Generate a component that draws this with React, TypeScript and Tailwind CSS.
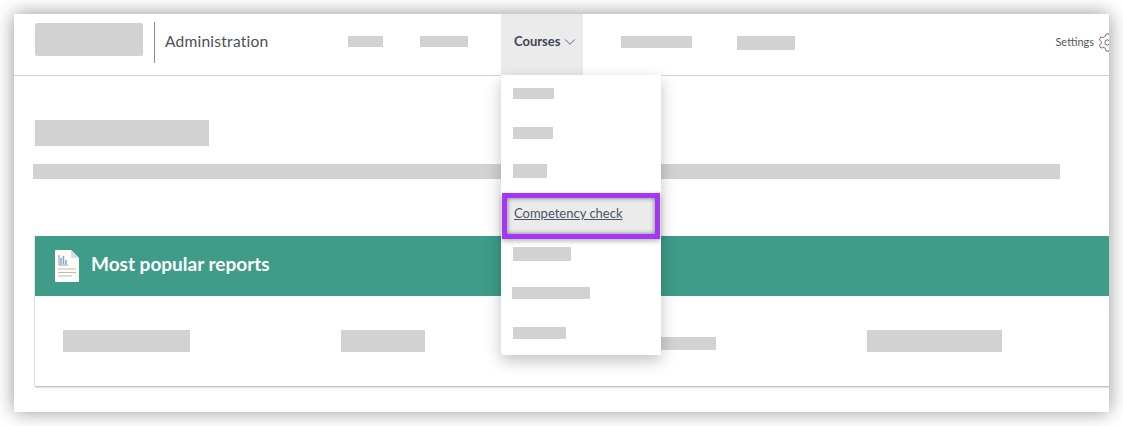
import { ChevronDown, Settings } from "lucide-react";

const lato = { fontFamily: "Lato, sans-serif" };

function Blank({ className }: { className: string }) {
  return <div className={`bg-[#d2d2d2] ${className}`} />;
}

function ReportIcon() {
  return (
    <svg width="24" height="32" viewBox="0 0 24 32" className="shrink-0">
      <path d="M1 0h15l8 8v23a1 1 0 0 1-1 1H1a1 1 0 0 1-1-1V1a1 1 0 0 1 1-1z" fill="#fffef9" />
      <path d="M16 0l8 8h-7a1 1 0 0 1-1-1z" fill="#dcdcd8" />
      <path d="M4 5v10h9" fill="none" stroke="#8d97a8" strokeWidth="1" />
      <path d="M6 14V8M8.500 14V6M11 14v-4" fill="none" stroke="#7fa3d6" strokeWidth="1.500" />
      <path d="M3 19h18M3 22.500h18M3 26h14" fill="none" stroke="#bcbcae" strokeWidth="1.200" />
    </svg>
  );
}

function CoursesMenu() {
  return (
    <div className="absolute left-0 top-[61px] z-10 flex h-[280px] w-[160px] flex-col rounded-b-[2px] bg-white shadow-[0_6px_16px_rgba(0,0,0,0.24)]">
      <div className="flex h-[38px] shrink-0 items-end pl-3 pb-[14px]"><Blank className="h-[11px] w-[41px]" /></div>
      <div className="flex h-[40px] shrink-0 items-end pl-3 pb-[14px]"><Blank className="h-[12px] w-[40px]" /></div>
      <div className="flex h-[40px] shrink-0 items-end pl-3 pb-[15px]"><Blank className="h-[14px] w-[34px]" /></div>
      <div className="mx-px h-[46px] shrink-0 border-[5px] border-[#a436f5] bg-[#ebebeb] pl-[7px] pt-[7px] text-[13px] leading-4 text-[#4a5568] underline shadow-[0_2px_5px_rgba(0,0,0,0.3),inset_0_0_5px_rgba(0,0,0,0.5)]">
        Competency check
      </div>
      <div className="flex h-[36px] shrink-0 items-end pl-3 pb-[14px]"><Blank className="h-[14px] w-[58px]" /></div>
      <div className="flex h-[38px] shrink-0 items-end pl-[11px] pb-[14px]"><Blank className="h-[12px] w-[78px]" /></div>
      <div className="flex h-[40px] shrink-0 items-end pl-3 pb-[14px]"><Blank className="h-[12px] w-[53px]" /></div>
    </div>
  );
}

function Header() {
  return (
    <header className="flex h-[62px] shrink-0 items-center border-b border-[#d4d4d4] pl-[21px]">
      <Blank className="mb-[10px] h-[33px] w-[108px] rounded-[2px]" />
      <div className="mb-[4px] ml-[11px] h-[41px] w-px bg-[#8c8c8c]" />
      <span className="mb-[6px] ml-[10px] w-[104px] text-[15.5px] tracking-[0.25px] text-[#4a4f57]">Administration</span>
      <nav className="ml-[79px] flex h-[61px] items-center">
        <Blank className="mb-[6px] h-[11px] w-[35px]" />
        <Blank className="mb-[6px] ml-[37px] h-[11px] w-[48px]" />
        <div className="relative ml-[33px]">
          <button className="flex h-[61px] w-[82px] items-center gap-[1px] bg-[#ebebeb] pb-[6px] pl-[13px] text-[13px] font-bold text-[#3f4654]" style={lato}>
            Courses
            <ChevronDown size={18} strokeWidth={1.1} />
          </button>
          <CoursesMenu />
        </div>
        <Blank className="mb-[6px] ml-[38px] h-[12px] w-[71px]" />
        <Blank className="mb-[4px] ml-[45px] h-[14px] w-[58px]" />
      </nav>
      <div className="mb-[5px] ml-auto flex items-center gap-[3px] overflow-hidden">
        <span className="ml-[260px] text-[11px] text-[#4f5663]">Settings</span>
        <Settings size={21} strokeWidth={1} className="-mr-[9px] shrink-0 text-[#555]" />
      </div>
    </header>
  );
}

function ReportsCard() {
  return (
    <section className="ml-[21px] mt-[57px] -mr-[10px] h-[150px] bg-white shadow-[0_1px_2px_rgba(0,0,0,0.35)]">
      <div className="flex h-[60px] items-center gap-3 bg-[#3e9c89] pl-5 text-[19px] font-bold text-white">
        <ReportIcon />
        <h2 className="pb-[4px]">Most popular reports</h2>
      </div>
      <div className="flex h-[90px] items-center pl-7">
        <Blank className="h-[22px] w-[127px]" />
        <Blank className="ml-[151px] h-[22px] w-[84px]" />
        <Blank className="ml-[235px] mt-[4px] h-[13px] w-[56px]" />
        <Blank className="ml-[151px] h-[22px] w-[135px]" />
      </div>
    </section>
  );
}

export default function App() {
  return (
    <div className="h-[426px] w-[1123px] overflow-hidden bg-white p-[14px] pb-0" style={lato}>
      <div className="flex h-[398px] w-[1095px] flex-col bg-white shadow-[0_0_18px_rgba(0,0,0,0.42)]">
        <div className="flex h-full flex-col overflow-hidden">
          <Header />
          <Blank className="ml-[21px] mt-[44px] h-[26px] w-[174px] shrink-0" />
          <Blank className="ml-[19px] mt-[18px] h-[15px] w-[1027px] shrink-0" />
          <ReportsCard />
        </div>
      </div>
    </div>
  );
}
